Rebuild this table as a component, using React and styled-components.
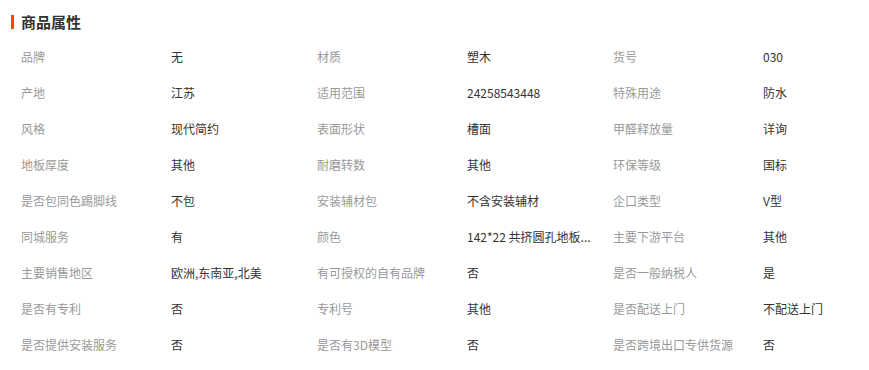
import React from 'react';
import styled, { createGlobalStyle } from 'styled-components';

const GlobalStyle = createGlobalStyle`
  html, body {
    margin: 0;
    padding: 0;
    background: #fff;
    overflow: hidden;
  }
  body {
    font-family: "Noto Sans CJK SC", "Liberation Sans", sans-serif;
  }
`;

const Wrapper = styled.div`
  padding: 13px 0 0 11px;
  width: 900px;
`;

const Title = styled.h3`
  margin: 0;
  display: flex;
  align-items: center;
  gap: 7px;
  height: 18px;
  font-size: 15px;
  font-weight: bold;
  color: #333;
  line-height: 18px;

  &::before {
    content: '';
    display: block;
    width: 3px;
    height: 14px;
    background: #ff4400;
  }
`;

const Grid = styled.div`
  display: grid;
  grid-template-columns: repeat(3, 150px 146px);
  margin-top: 16px;
`;

const Cell = styled.div`
  height: 36px;
  line-height: 20px;
  padding: 0 10px;
  font-size: 12px;
  color: ${props => (props.label ? '#999' : '#333')};
  white-space: nowrap;
`;

const attrs = [
  ['品牌', '无'], ['材质', '塑木'], ['货号', '030'],
  ['产地', '江苏'], ['适用范围', '24258543448'], ['特殊用途', '防水'],
  ['风格', '现代简约'], ['表面形状', '槽面'], ['甲醛释放量', '详询'],
  ['地板厚度', '其他'], ['耐磨转数', '其他'], ['环保等级', '国标'],
  ['是否包同色踢脚线', '不包'], ['安装辅材包', '不含安装辅材'], ['企口类型', 'V型'],
  ['同城服务', '有'], ['颜色', '142*22 共挤圆孔地板...'], ['主要下游平台', '其他'],
  ['主要销售地区', '欧洲,东南亚,北美'], ['有可授权的自有品牌', '否'], ['是否一般纳税人', '是'],
  ['是否有专利', '否'], ['专利号', '其他'], ['是否配送上门', '不配送上门'],
  ['是否提供安装服务', '否'], ['是否有3D模型', '否'], ['是否跨境出口专供货源', '否'],
];

const App = () => (
  <>
    <GlobalStyle />
    <Wrapper>
      <Title>商品属性</Title>
      <Grid>
        {attrs.map(([k, v]) => (
          <React.Fragment key={k}>
            <Cell label>{k}</Cell>
            <Cell>{v}</Cell>
          </React.Fragment>
        ))}
      </Grid>
    </Wrapper>
  </>
);

export default App;
